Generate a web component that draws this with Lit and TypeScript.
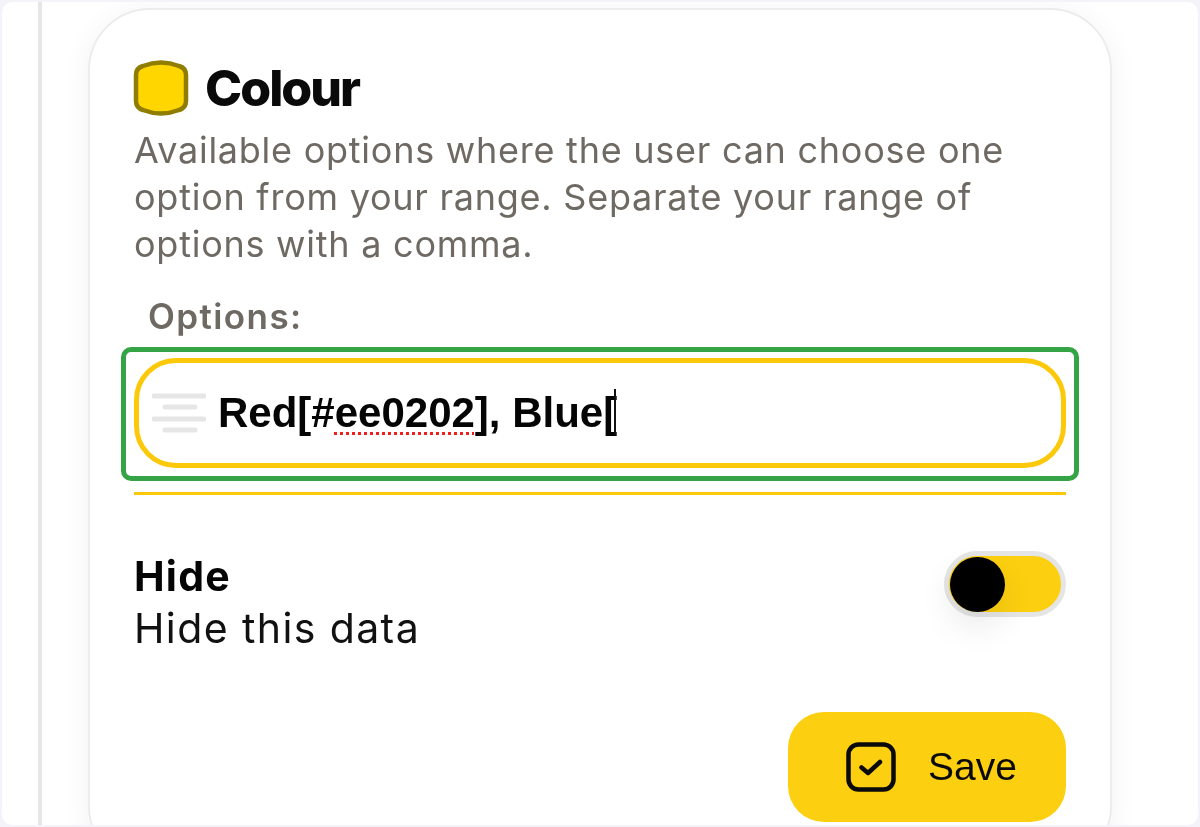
import { LitElement, html, css } from "lit";
import { customElement } from "lit/decorators.js";

@customElement("app-root")
export class AppRoot extends LitElement {
  static styles = css`
    :host { display: block; width: 1200px; height: 827px; overflow: hidden; background: #f3f3f9; box-sizing: border-box; padding: 2px 2px 2px 2px; }
    * { box-sizing: border-box; }
    .frame { height: 823px; background: #fff; border-radius: 10px; overflow: hidden; display: flex; padding-left: 36px; }
    .rail { width: 4px; flex: none; background: #e6e6e9; margin-right: 46px; }
    .card {
      flex: none; width: 1024px; height: 860px; margin-top: 6px; background: #fff;
      border: 2px solid #ececef; border-radius: 62px; padding: 50px 44px 0 44px;
      box-shadow: 0 4px 30px rgba(0,0,0,.055);
      font-family: Inter, sans-serif; filter: blur(0.4px);
    }
    .title { display: flex; align-items: center; gap: 16px; height: 56px; }
    .title svg { margin-left: -1px; }
    .title h1 { margin: 0; font: 800 50px/56px Inter, sans-serif; letter-spacing: -2px; color: #0a0a0a; }
    .desc { margin: 11px 0 0; font: 400 36px/47px Inter, sans-serif; color: #6f6963; letter-spacing: 0.75px; }
    .label { margin: 28px 0 0 14px; font: 600 35px/40px Inter, sans-serif; color: #6f6963; letter-spacing: 1.4px; }
    .inputwrap { position: relative; margin-top: 22px; }
    .input { height: 110px; border: 5px solid #fcc90a; border-radius: 42px; display: flex; align-items: center; padding-left: 13px; gap: 12px; }
    .text { font: 700 42px/48px "Liberation Sans", Arial, sans-serif; color: #050505; position: relative; display: flex; }
    .miss { text-decoration: underline dotted #f01f1f 3px; text-underline-offset: 5px; }
    .caret { width: 2px; height: 46px; background: #111; margin-left: -3px; }
    .green { position: absolute; left: -13px; right: -13px; top: -11px; bottom: -13px; border: 5px solid #35a447; border-radius: 10px; pointer-events: none; }
    .rule { height: 2.5px; background: #fcc90a; margin-top: 24px; }
    .row { display: flex; justify-content: space-between; margin-top: 55px; }
    .row b { display: block; font: 700 41px/52px Inter, sans-serif; color: #050505; letter-spacing: 1.2px; }
    .row span { display: block; font: 400 41px/52px Inter, sans-serif; color: #111; letter-spacing: 1.4px; }
    .toggle { width: 122px; height: 66px; margin-top: 1px; border: 5px solid #e5e5e5; border-radius: 33px; background: #fccf10; position: relative; padding: 1px 0 0 1px; }
    .knob { width: 55px; height: 55px; border-radius: 50%; background: #000; box-shadow: 0 14px 34px rgba(0,0,0,.09); }
    .actions { display: flex; justify-content: flex-end; margin-top: 58px; }
    .save { width: 278px; height: 110px; border-radius: 36px; background: #fccf10; display: flex; align-items: center; padding-left: 58px; gap: 32px; font: 400 39px/44px "Liberation Sans", Arial, sans-serif; color: #0a0a0a; border: 0; }
  `;

  render() {
    return html`
      <div class="frame">
        <div class="rail"></div>
        <section class="card">
          <div class="title">
            <svg width="56" height="56" viewBox="0 0 56 56">
              <path d="M10 6 Q28 -1 46 6 Q53 8 53 15 L53 41 Q53 48 46 50 Q28 57 10 50 Q3 48 3 41 L3 15 Q3 8 10 6 Z" fill="#ffd600" stroke="#8f7d00" stroke-width="4.5"/>
            </svg>
            <h1>Colour</h1>
          </div>
          <p class="desc">Available options where the user can choose one option from your range. Separate your range of options with a comma.</p>
          <div class="label">Options:</div>
          <div class="inputwrap">
            <div class="input">
              <svg width="54" height="40" viewBox="0 0 54 40" stroke="#e6e6e6" stroke-width="5" stroke-linecap="round">
                <path d="M2 3H52M13 14H43M2 26H52M13 37H43"/>
              </svg>
              <div class="text"><span>Red[#<span class="miss">ee0202</span>], Blue[</span><i class="caret"></i></div>
            </div>
            <div class="green"></div>
          </div>
          <div class="rule"></div>
          <div class="row">
            <div><b>Hide</b><span>Hide this data</span></div>
            <div class="toggle"><div class="knob"></div></div>
          </div>
          <div class="actions">
            <button class="save">
              <svg width="50" height="50" viewBox="0 0 50 50" fill="none" stroke="#0a0a0a" stroke-width="4.5" stroke-linecap="round" stroke-linejoin="round">
                <rect x="2.5" y="2.5" width="45" height="45" rx="10"/>
                <path d="M15.5 25.5L22 31L34 20"/>
              </svg>
              Save
            </button>
          </div>
        </section>
      </div>
    `;
  }
}
